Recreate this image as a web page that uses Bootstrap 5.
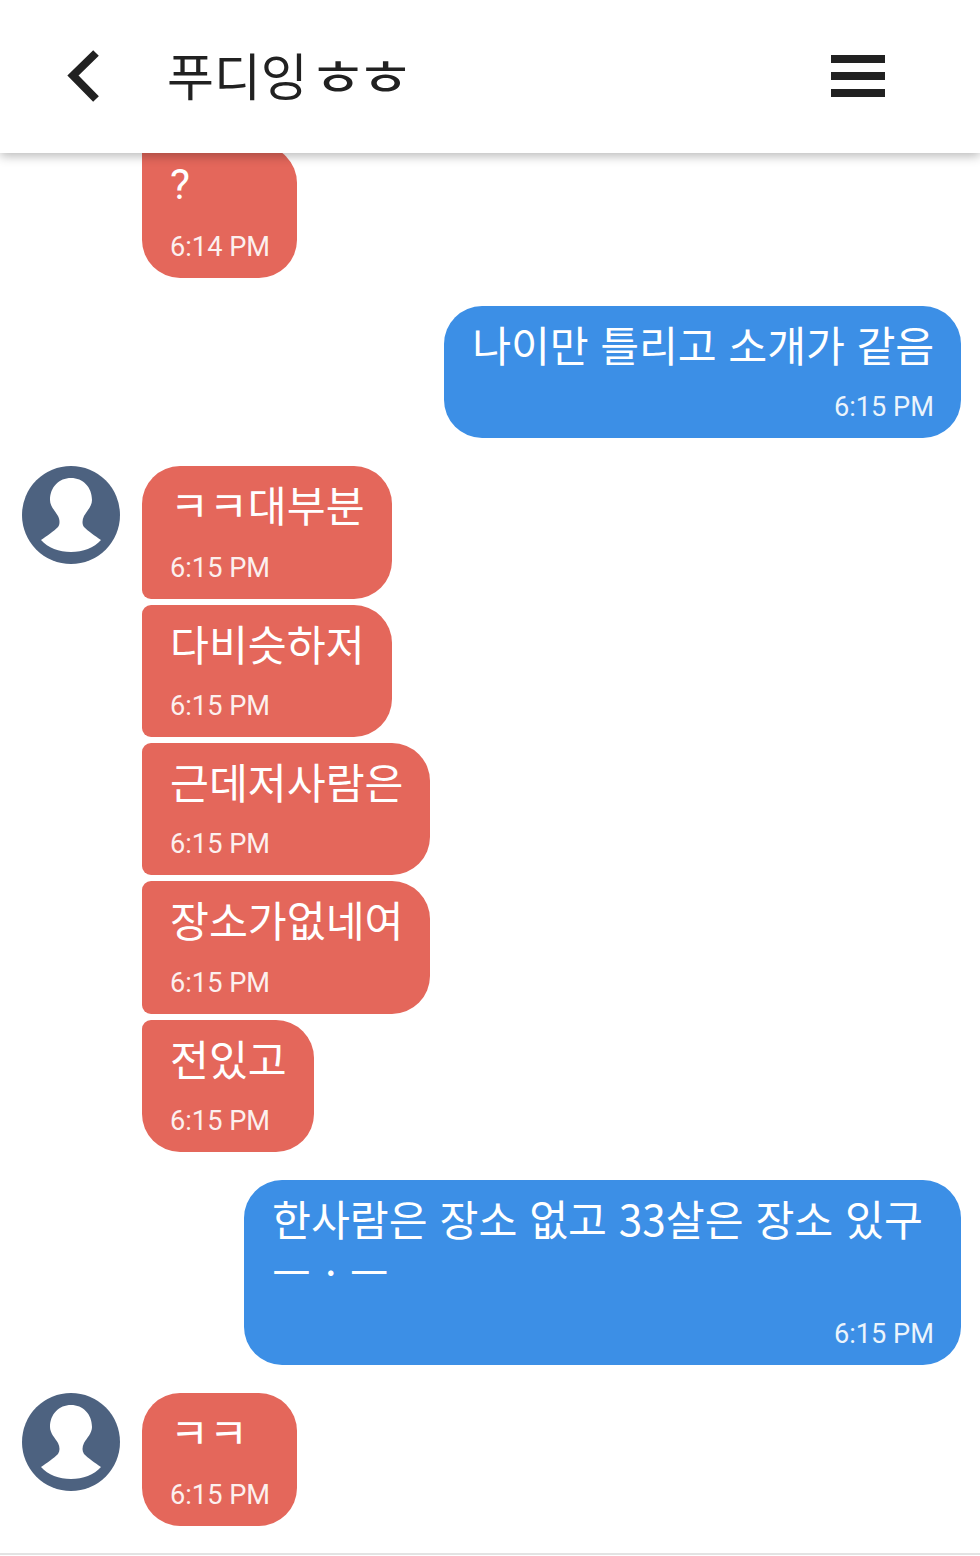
<!DOCTYPE html>
<html lang="ko">
<head>
    <meta charset="UTF-8">
    <meta name="viewport" content="width=device-width, initial-scale=1.0">
    <title>푸디잉ㅎㅎ</title>
    <link rel="stylesheet" href="https://cdn.jsdelivr.net/npm/bootstrap@5.3.0/dist/css/bootstrap.min.css">
    <style>
        html, body { height: 100%; }
        body {
            background-color: #fff;
            font-family: Roboto, "Noto Sans CJK KR", sans-serif;
            overflow: hidden;
        }
        .chat-screen { height: 1556px; }
        .chat-top {
            height: 153px;
            padding-left: 67px;
            padding-right: 95px;
            box-shadow: 0 3px 10px rgba(0, 0, 0, .28);
            z-index: 5;
        }
        .chat-back { width: 33px; height: 52px; margin-right: 67px; margin-bottom: 2px; }
        .chat-title {
            font-family: "Noto Sans CJK KR", sans-serif;
            font-size: 51px;
            line-height: 1;
            color: #212121;
            margin-bottom: 4px;
        }
        .chat-title-jamo {
            display: inline-block;
            letter-spacing: -9.5px;
            transform: scaleX(1.27);
            transform-origin: left center;
        }
        .chat-menu { width: 54px; height: 42px; margin-bottom: 2px; }
        .chat-list {
            height: 1400px;
            padding: 0 19px 27.5px 22px;
            gap: 28px;
            overflow: hidden;
        }
        .msg-stack { gap: 5.8px; }
        .msg-avatar { width: 98px; height: 98px; margin-right: 22px; }
        .msg-spacer { margin-left: 120px; }
        .bubble {
            border-radius: 38px;
            padding: 12px 27px 10px 28px;
            color: #fff;
            max-width: 717px;
        }
        .bubble-in { background-color: #e4675b; }
        .bubble-out { background-color: #3c8fe6; }
        .bubble-first { border-bottom-left-radius: 9px; }
        .bubble-mid { border-top-left-radius: 9px; border-bottom-left-radius: 9px; }
        .bubble-last { border-top-left-radius: 9px; }
        .bubble-text {
            font-family: "Noto Sans CJK KR", sans-serif;
            font-size: 42.3px;
            line-height: 52.5px;
            margin-bottom: 17px;
        }
        .bubble-text-latin { font-family: Roboto, sans-serif; padding-top: 2px; margin-bottom: 15px; }
        .bubble-text-tight { letter-spacing: -.13px; }
        .bubble-time {
            font-size: 27.2px;
            line-height: 41px;
            opacity: .9;
        }
        .chat-bottom { height: 2px; background-color: #e3e3e3; }
    </style>
</head>
<body>
    <div class="chat-screen d-flex flex-column">
        <!-- Topo -->
        <header class="chat-top d-flex align-items-center bg-white position-relative">
            <svg class="chat-back" viewBox="0 0 33 52" fill="none" stroke="#212121" stroke-width="8">
                <path d="M29 3 L6 25.5 L29 49"/>
            </svg>
            <div class="chat-title">푸디잉<span class="chat-title-jamo">ㅎㅎ</span></div>
            <svg class="chat-menu ms-auto" viewBox="0 0 54 42" fill="#212121">
                <rect x="0" y="0" width="54" height="8"/>
                <rect x="0" y="17" width="54" height="8"/>
                <rect x="0" y="34" width="54" height="8"/>
            </svg>
        </header>

        <!-- Mensagens -->
        <main class="chat-list d-flex flex-column justify-content-end">
            <div class="d-flex msg-spacer">
                <div class="bubble bubble-in bubble-last">
                    <div class="bubble-text bubble-text-latin">?</div>
                    <div class="bubble-time">6:14 PM</div>
                </div>
            </div>

            <div class="d-flex justify-content-end">
                <div class="bubble bubble-out">
                    <div class="bubble-text bubble-text-tight">나이만 틀리고 소개가 같음</div>
                    <div class="bubble-time text-end">6:15 PM</div>
                </div>
            </div>

            <div class="d-flex align-items-start">
                <svg class="msg-avatar flex-shrink-0" viewBox="0 0 98 98">
                    <circle cx="49" cy="49" r="49" fill="#4d6280"/>
                    <path fill="#fff" d="M49 12c-12 0-21 9-21 22 0 6 5 11 8 16 2 4 2 8 0 11-4 4-11 9-17 13 7 8 18 12 30 12s23-4 30-12c-6-4-13-9-17-13-2-3-2-7 0-11 3-5 8-10 8-16 0-13-9-22-21-22z"/>
                </svg>
                <div class="msg-stack d-flex flex-column align-items-start">
                    <div class="bubble bubble-in bubble-first">
                        <div class="bubble-text">ㅋㅋ대부분</div>
                        <div class="bubble-time">6:15 PM</div>
                    </div>
                    <div class="bubble bubble-in bubble-mid">
                        <div class="bubble-text">다비슷하저</div>
                        <div class="bubble-time">6:15 PM</div>
                    </div>
                    <div class="bubble bubble-in bubble-mid">
                        <div class="bubble-text">근데저사람은</div>
                        <div class="bubble-time">6:15 PM</div>
                    </div>
                    <div class="bubble bubble-in bubble-mid">
                        <div class="bubble-text">장소가없네여</div>
                        <div class="bubble-time">6:15 PM</div>
                    </div>
                    <div class="bubble bubble-in bubble-last">
                        <div class="bubble-text">전있고</div>
                        <div class="bubble-time">6:15 PM</div>
                    </div>
                </div>
            </div>

            <div class="d-flex justify-content-end">
                <div class="bubble bubble-out">
                    <div class="bubble-text">한사람은 장소 없고 33살은 장소 있구 ㅡㆍㅡ</div>
                    <div class="bubble-time text-end">6:15 PM</div>
                </div>
            </div>

            <div class="d-flex align-items-start">
                <svg class="msg-avatar flex-shrink-0" viewBox="0 0 98 98">
                    <circle cx="49" cy="49" r="49" fill="#4d6280"/>
                    <path fill="#fff" d="M49 12c-12 0-21 9-21 22 0 6 5 11 8 16 2 4 2 8 0 11-4 4-11 9-17 13 7 8 18 12 30 12s23-4 30-12c-6-4-13-9-17-13-2-3-2-7 0-11 3-5 8-10 8-16 0-13-9-22-21-22z"/>
                </svg>
                <div class="bubble bubble-in">
                    <div class="bubble-text">ㅋㅋ</div>
                    <div class="bubble-time">6:15 PM</div>
                </div>
            </div>
        </main>
        <div class="chat-bottom"></div>
    </div>
    <script src="https://cdn.jsdelivr.net/npm/bootstrap@5.3.0/dist/js/bootstrap.bundle.min.js"></script>
</body>
</html>
